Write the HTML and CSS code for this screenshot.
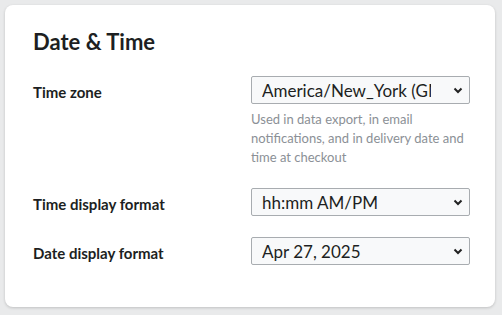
FILE: index.html
```html
<!DOCTYPE html>
<html>
<head>
<meta charset="utf-8">
<link rel="stylesheet" href="styles.css">
</head>
<body>
<div class="card">
  <h2 class="title">Date &amp; Time</h2>
  <div class="form">
    <div class="row">
      <div class="label">Time zone</div>
      <div class="control">
        <div class="select">
          <span class="value">America/New_York (GMT-04:00)</span>
          <svg class="chev" width="10" height="7" viewBox="0 0 10 7"><path d="M1.5 1.5 L5 5 L8.5 1.5" fill="none" stroke="#222" stroke-width="2"/></svg>
        </div>
        <p class="hint">Used in data export, in email notifications, and in delivery date and time at checkout</p>
      </div>
    </div>
    <div class="row">
      <div class="label">Time display format</div>
      <div class="control">
        <div class="select">
          <span class="value">hh:mm AM/PM</span>
          <svg class="chev" width="10" height="7" viewBox="0 0 10 7"><path d="M1.5 1.5 L5 5 L8.5 1.5" fill="none" stroke="#222" stroke-width="2"/></svg>
        </div>
      </div>
    </div>
    <div class="row">
      <div class="label">Date display format</div>
      <div class="control">
        <div class="select">
          <span class="value">Apr 27, 2025</span>
          <svg class="chev" width="10" height="7" viewBox="0 0 10 7"><path d="M1.5 1.5 L5 5 L8.5 1.5" fill="none" stroke="#222" stroke-width="2"/></svg>
        </div>
      </div>
    </div>
  </div>
</div>
</body>
</html>
```
FILE: styles.css
```css
html, body { margin: 0; padding: 0; }
body {
  background: #e9eaeb;
  font-family: Lato, "Noto Sans", sans-serif;
  color: #1d1f22;
  padding: 5px 7px 8px 5px;
  width: 502px;
  height: 315px;
  box-sizing: border-box;
}
.card {
  background: #fff;
  border-radius: 8px;
  box-shadow: 0 1px 3px rgba(0,0,0,0.18);
  padding: 22px 25px 42px 28px;
  height: 302px;
  box-sizing: border-box;
}
.title {
  margin: 0;
  font-size: 22px;
  font-weight: 700;
  line-height: 30px;
  color: #1d1f22;
}
.form {
  display: flex;
  flex-direction: column;
  gap: 21px;
  margin-top: 19px;
}
.row {
  display: grid;
  grid-template-columns: 218px 219px;
  align-items: start;
}
.label {
  font-size: 15px;
  font-weight: 700;
  line-height: 24px;
  padding-top: 4px;
}
.select {
  display: flex;
  align-items: center;
  height: 28px;
  box-sizing: border-box;
  border: 1px solid #a8acb0;
  border-radius: 2px;
  background: #f8f9fa;
  padding: 0 6px 0 10px;
  font-size: 17px;
  color: #1d1f22;
}
.value {
  flex: 1;
  overflow: hidden;
  white-space: nowrap;
  margin-right: 22px;
}
.chev { flex: none; }
.hint {
  margin: 6px 0 0 0;
  font-size: 13px;
  line-height: 19px;
  color: #8b9096;
}
```
